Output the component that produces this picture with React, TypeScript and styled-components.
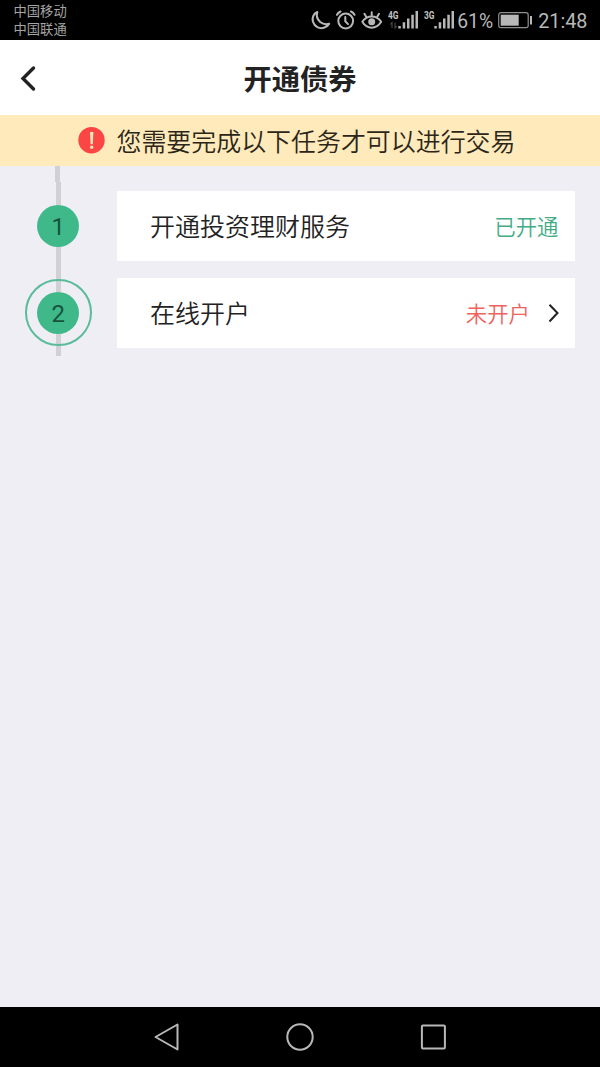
import React from "react";
import styled, { createGlobalStyle } from "styled-components";

const GlobalStyle = createGlobalStyle`
  * { box-sizing: border-box; }
  body {
    margin: 0;
    font-family: Roboto, "Noto Sans CJK SC", sans-serif;
    background: #efeef5;
  }
`;

const GREY = "#b8b8b8";
const DEMI_LIGHT = `Roboto, "Noto Sans CJK SC DemiLight", "Noto Sans CJK SC", sans-serif`;

const Screen = styled.div`
  display: flex;
  flex-direction: column;
  width: 600px;
  height: 1067px;
  overflow: hidden;
  background: #efeef5;
`;

const StatusBar = styled.header`
  display: flex;
  justify-content: space-between;
  height: 40px;
  padding: 0 13px 0 13.5px;
  background: #000;
  color: ${GREY};
`;

const Carriers = styled.div`
  padding-top: 3px;
  font-size: 13.3px;
  line-height: 18px;
  color: #a5a5a5;
`;

const StatusIcons = styled.div`
  display: flex;
  align-items: center;
  height: 40px;
`;

const Glyph = styled.svg<{ $gap: number }>`
  display: block;
  flex: none;
  margin-right: ${(p) => p.$gap}px;
`;

const StatusText = styled.span<{ $width: number; $size?: number; $gap?: number }>`
  width: ${(p) => p.$width}px;
  margin-right: ${(p) => p.$gap ?? 0}px;
  font-size: ${(p) => p.$size ?? 20}px;
  line-height: 40px;
  padding-top: 3px;
  white-space: nowrap;
`;

const TitleBar = styled.div`
  display: grid;
  grid-template-columns: 60px 1fr 60px;
  align-items: center;
  height: 75px;
  background: #fff;
`;

const BackButton = styled.button`
  display: flex;
  padding: 0 0 0 20px;
  border: 0;
  background: none;
`;

const Title = styled.h1`
  margin: 0;
  padding-top: 6px;
  text-align: center;
  font-size: 28.3px;
  line-height: 40px;
  font-weight: 700;
  color: #222;
`;

const Notice = styled.div`
  display: flex;
  align-items: center;
  height: 51px;
  padding-left: 78px;
  background: #ffeabb;
  color: #2b2618;
  font-size: 24.95px;
  line-height: 36px;
  white-space: nowrap;
`;

const NoticeText = styled.span`
  padding-top: 4px;
  margin-left: 11.5px;
  font-family: ${DEMI_LIGHT};
  font-weight: 350;
`;

const Steps = styled.main`
  flex: 1;
`;

const Step = styled.section`
  display: flex;
`;

const Rail = styled.div`
  display: flex;
  flex-direction: column;
  align-items: center;
  width: 117px;
`;

const Line = styled.div<{ $height: number; $shifted?: boolean }>`
  width: 5px;
  height: ${(p) => p.$height}px;
  margin-right: ${(p) => (p.$shifted ? 2 : 0)}px;
  background: #d1d0d5;
`;

const Badge = styled.div<{ $current?: boolean }>`
  position: relative;
  display: flex;
  align-items: center;
  justify-content: center;
  width: 42px;
  height: 42px;
  margin-right: 0.6px;
  padding-top: 2px;
  border-radius: 50%;
  background: #40b98a;
  color: #17543c;
  font-size: 24px;
  line-height: 42px;

  &::after {
    content: "";
    display: ${(p) => (p.$current ? "block" : "none")};
    position: absolute;
    inset: -12.5px;
    border: 2px solid #5abc99;
    border-radius: 50%;
  }
`;

const Card = styled.div<{ $top: number }>`
  display: flex;
  align-items: center;
  width: 458px;
  height: 70px;
  margin-top: ${(p) => p.$top}px;
  padding: 2px 16.5px 0 33px;
  background: #fff;
  color: #222;
`;

const CardTitle = styled.span`
  flex: 1;
  padding-top: 2px;
  font-family: ${DEMI_LIGHT};
  font-size: 25px;
  font-weight: 350;
  line-height: 36px;
`;

const CardState = styled.span<{ $done?: boolean }>`
  padding-top: 1px;
  font-family: ${DEMI_LIGHT};
  font-size: 21.4px;
  font-weight: 350;
  line-height: 32px;
  color: ${(p) => (p.$done ? "#43ac87" : "#ee6260")};
`;

const Chevron = styled.svg`
  display: block;
  margin: 0 0 3px 17.5px;
`;

const NavBar = styled.nav`
  display: flex;
  align-items: center;
  height: 60px;
  padding-left: 152px;
  background: #000;
`;

const Signal = ({ label, gap, arrows }: { label: string; gap: number; arrows?: boolean }) => (
  <Glyph $gap={gap} width="32" height="20" viewBox="0 0 32 20">
    <text
      x="0"
      y="9"
      fill="#c4c4c4"
      fontFamily="Roboto, sans-serif"
      fontSize="10.5"
      fontWeight="700"
      textLength="10.5"
      lengthAdjust="spacingAndGlyphs"
    >
      {label}
    </text>
    {arrows && (
      <path d="M4 18V12.5L2.3 14.5M7 12.5V18L8.7 16" fill="none" stroke="#4c4c4c" strokeWidth="1.1" />
    )}
    <path
      d="M10.3 16h2.5v2.4h-2.5zM14.7 12.3h2.5v6.1h-2.5zM19 8.5h2.5v9.9h-2.5zM23.3 4.7h2.5v13.7h-2.5zM27.500 1h2.5v17.4H27.500z"
      fill={GREY}
    />
  </Glyph>
);

export default function App() {
  return (
    <>
      <GlobalStyle />
      <Screen>
        <StatusBar>
          <Carriers>
            <div>中国移动</div>
            <div>中国联通</div>
          </Carriers>
          <StatusIcons>
            <Glyph $gap={5} width="20" height="20" viewBox="0 0 20 20" fill="none" stroke={GREY} strokeWidth="2.1" strokeLinejoin="round">
              <path d="M6.3 2C2.500 3.500.9 7.800 2 11.800c1.500 5 6.500 7.300 10.800 6 2.500-.7 4.300-2 5.400-4-3.200.8-6.500.3-9-1.800C6.200 9.300 5.200 5.600 6.300 2z" />
            </Glyph>
            <Glyph $gap={5} width="20" height="20" viewBox="0 0 20 20" fill="none" stroke={GREY} strokeWidth="2" strokeLinecap="round">
              <circle cx="9.700" cy="11" r="7.4" />
              <path d="M9.300 7v4.300l2.700 2.800M1 4.800Q2.100 2.500 4.500 1.500M18.500 4.800Q17.400 2.500 15 1.500" />
            </Glyph>
            <Glyph $gap={4.5} width="22" height="20" viewBox="0 0 22 20" fill="none" stroke={GREY} strokeWidth="2" strokeLinecap="round">
              <path d="M1.300 11.800C3.700 8.200 7 6.600 10.700 6.600s7 1.600 9.500 5.200C17.700 15.800 14.400 17.700 10.700 17.700S3.700 15.800 1.300 11.800z" strokeLinejoin="round" />
              <circle cx="10.700" cy="11.8" r="3.5" fill={GREY} stroke="none" />
              <path d="M10.700 2.200v3M3.400 3.800l1.800 3M18 3.800l-1.800 3" />
            </Glyph>
            <Signal label="4G" gap={4} arrows />
            <Signal label="3G" gap={1.5} />
            <StatusText $width={36} $size={19.3} $gap={5}>61%</StatusText>
            <Glyph $gap={4} width="36" height="18" viewBox="0 0 36 18">
              <rect x="0.7" y="1.7" width="29.5" height="15" rx="2.2" fill="none" stroke="#8f8f8f" strokeWidth="1.2" />
              <rect x="2.7" y="3.7" width="18" height="11" fill={GREY} />
              <rect x="32" y="5" width="2" height="8.5" fill={GREY} />
            </Glyph>
            <StatusText $width={48.8} $size={19.8}>21:48</StatusText>
          </StatusIcons>
        </StatusBar>

        <TitleBar>
          <BackButton aria-label="返回">
            <svg width="18" height="28" viewBox="0 0 18 28" fill="none" stroke="#222" strokeWidth="3.4" strokeLinecap="round" strokeLinejoin="miter">
              <path d="M13.500 4L3 14.500l10.500 10.500" />
            </svg>
          </BackButton>
          <Title>开通债券</Title>
        </TitleBar>

        <Notice>
          <svg width="27" height="27" viewBox="0 0 27 27">
            <circle cx="13.5" cy="13.2" r="13.2" fill="#fb4643" />
            <path d="M12 5h3.400l-.6 12.200h-2.200z" fill="#ffe3ba" />
            <circle cx="13.7" cy="20.3" r="1.7" fill="#ffe3ba" />
          </svg>
          <NoticeText>您需要完成以下任务才可以进行交易</NoticeText>
        </Notice>

        <Steps>
          <Step>
            <Rail>
              <Line $height={16} $shifted />
              <Line $height={23} />
              <Badge>1</Badge>
              <Line $height={22} />
            </Rail>
            <Card $top={25}>
              <CardTitle>开通投资理财服务</CardTitle>
              <CardState $done>已开通</CardState>
            </Card>
          </Step>
          <Step>
            <Rail>
              <Line $height={22.5} />
              <Badge $current>2</Badge>
              <Line $height={22.5} />
            </Rail>
            <Card $top={9}>
              <CardTitle>在线开户</CardTitle>
              <CardState>未开户</CardState>
              <Chevron width="11" height="20" viewBox="0 0 11 20" fill="none" stroke="#222" strokeWidth="2">
                <path d="M1.500 1.700L9.500 10l-8 8.500" />
              </Chevron>
            </Card>
          </Step>
        </Steps>

        <NavBar>
          <Glyph $gap={104} width="30" height="30" viewBox="0 0 30 30" fill="none" stroke={GREY} strokeWidth="2" strokeLinejoin="round">
            <path d="M25.500 2.500v25L3.500 15z" />
          </Glyph>
          <Glyph $gap={104} width="28" height="30" viewBox="0 0 28 30" fill="none" stroke={GREY} strokeWidth="2">
            <circle cx="14" cy="15" r="12.7" />
          </Glyph>
          <Glyph $gap={0} width="30" height="30" viewBox="0 0 30 30" fill="none" stroke={GREY} strokeWidth="2">
            <rect x="3.9" y="3.5" width="23" height="23" rx="1" />
          </Glyph>
        </NavBar>
      </Screen>
    </>
  );
}
